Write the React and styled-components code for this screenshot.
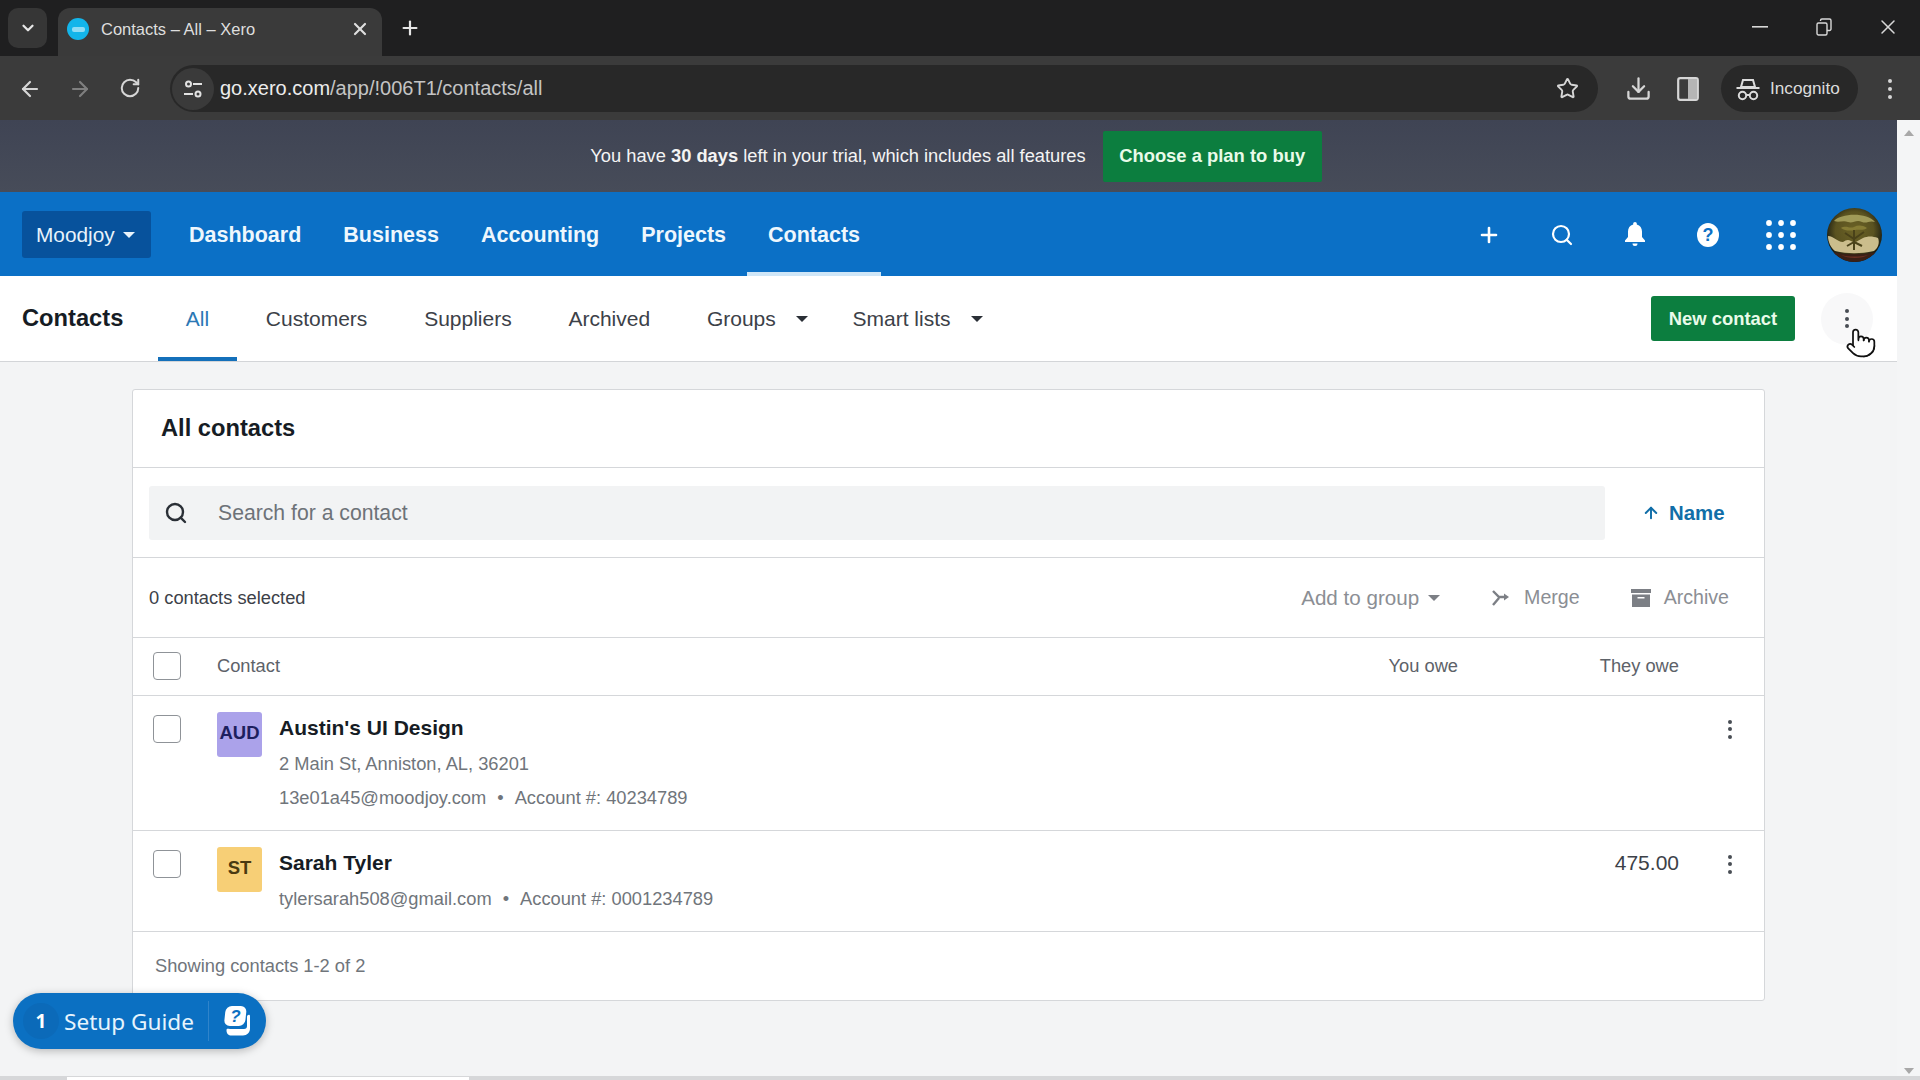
import React from 'react';
import styled, { createGlobalStyle } from 'styled-components';
import { ChevronDown, X, Plus, ArrowLeft, ArrowRight, RotateCw, Star, Download, Search, Pointer, ArrowUp } from 'lucide-react';

const Global = createGlobalStyle`
  html, body { margin: 0; padding: 0; height: 100%; overflow: hidden; }
  body { font-family: "Liberation Sans", Arial, sans-serif; background: #f3f4f5; }
  * { box-sizing: border-box; }
`;

const Frame = styled.div`
  width: 1920px; height: 1080px; display: flex; flex-direction: column; overflow: hidden; position: relative;
`;
const TabStrip = styled.div`
  height: 56px; background: #1f1f20; display: flex; align-items: flex-end; padding-left: 8px; color: #e6e6e6; flex: none;
`;
const TabMenu = styled.div`
  width: 39px; height: 40px; margin-bottom: 8px; background: #363636; border-radius: 10px; display: flex; align-items: center; justify-content: center;
`;
const ActiveTab = styled.div`
  width: 324px; height: 48px; margin-left: 11px; background: #3a3a3a; border-radius: 12px 12px 0 0; display: flex; align-items: center; padding: 0 12px 6px 9px; font-size: 16.5px; color: #dedede;
`;
const Favicon = styled.div`
  width: 22px; height: 22px; border-radius: 50%; background: #13b5ea; flex: none; margin-right: 12px; display: flex; align-items: center; justify-content: center;
  &::after { content: ''; width: 13px; height: 5px; background: #8fdcf5; border-radius: 2px; }
`;
const TabTitle = styled.span`flex: 1; white-space: nowrap;`;
const NewTab = styled.div`margin: 0 0 8px 16px; width: 24px; height: 40px; display: flex; align-items: center; justify-content: center;`;
const WindowControls = styled.div`
  margin-left: auto; display: flex; height: 56px; align-items: center; padding-bottom: 2px; padding-right: 0;
`;
const WinBtn = styled.div`width: 64px; display: flex; justify-content: center; align-items: center; color: #d8d8d8;`;

const Toolbar = styled.div`
  height: 64px; background: #3b3b3b; display: flex; align-items: center; flex: none; color: #d6d6d6; position: relative; padding-top: 1px;
`;
const NavGlyph = styled.div`
  width: 50px; display: flex; justify-content: center; color: ${p => p.$dim ? '#7f7f7f' : '#d6d6d6'};
`;
const GlyphGroup = styled.div`display: flex; padding-left: 5px; margin-right: 15px;`;
const Omnibox = styled.div`
  width: 1428px; height: 47px; background: #282828; border-radius: 24px; display: flex; align-items: center; padding: 0 19px 0 0; font-size: 20px; flex: none;
`;
const SiteChip = styled.div`
  width: 42px; height: 42px; margin-left: 2px; border-radius: 50%; background: #3a3a3a; display: flex; align-items: center; justify-content: center; margin-right: 6px; flex: none;
`;
const Url = styled.div`flex: 1; color: #c4c4c4; b { font-weight: 400; color: #ececec; }`;
const ToolIcons = styled.div`display: flex; align-items: center; margin-left: 15px; flex: 1;`;
const ToolIcon = styled.div`width: 50px; display: flex; justify-content: center;`;
const IncognitoPill = styled.div`
  width: 137px; height: 47px; background: #282828; border-radius: 24px; margin-left: 8px; display: flex; align-items: center; padding-left: 14px; gap: 9px; font-size: 17.2px; color: #dcdcdc;
`;
const ChromeMenu = styled.div`margin-left: 14px; width: 36px; display: flex; justify-content: center;`;

const Viewport = styled.div`flex: 1; display: flex; min-height: 0;`;
const Page = styled.div`flex: 1; min-width: 0; display: flex; flex-direction: column; background: #f3f4f5;`;
const ScrollTrack = styled.div`
  width: 23px; background: #f4f5f6; display: flex; flex-direction: column; align-items: center; justify-content: space-between; padding: 10px 0 6px; flex: none;
`;
const ScrollArrow = styled.div`
  width: 0; height: 0; border-left: 5px solid transparent; border-right: 5px solid transparent;
  ${p => p.$down ? 'border-top: 6px solid #a8a8a8;' : 'border-bottom: 6px solid #a8a8a8;'}
`;

const Banner = styled.div`
  height: 72px; background: linear-gradient(#3f4454, #474c59); display: flex; align-items: center; justify-content: center; color: #f4f4f4; font-size: 18.3px; flex: none;
  b { font-weight: 700; }
`;
const BannerInner = styled.div`display: flex; align-items: center; margin-left: 15px;`;
const PlanButton = styled.div`
  width: 219px; height: 51px; background: #0c7e3f; margin-left: 17px; display: flex; align-items: center; justify-content: center; font-weight: 700; font-size: 18.4px; color: #e9fbe9; border-radius: 2px;
`;

const TopNav = styled.div`
  height: 84px; background: #0b70c6; display: flex; align-items: center; padding: 1px 6px 0 22px; flex: none; color: #fff;
`;
const OrgButton = styled.div`
  width: 129px; height: 47px; background: #07529c; border-radius: 3px; display: flex; align-items: center; padding-left: 14px; font-size: 20.8px; color: #e8f3fb; margin-right: 17px; flex: none;
`;
const Caret = styled.span`
  display: inline-block; width: 0; height: 0; border-left: ${p => p.$s || 6}px solid transparent; border-right: ${p => p.$s || 6}px solid transparent; border-top: ${p => p.$s || 6}px solid ${p => p.$c || 'currentColor'}; margin-left: ${p => p.$m ?? 8}px;
`;
const NavItem = styled.div`
  align-self: stretch; padding: 1px 21px 0; display: flex; align-items: center; font-weight: 700; font-size: 21.5px; color: #eef7fd; position: relative;
  ${p => p.$active && `&::after { content: ''; position: absolute; left: 0; right: 0; bottom: 0; height: 4px; background: #cfe6f7; }`}
`;
const NavRight = styled.div`margin-left: auto; display: flex; align-items: center;`;
const NavIcon = styled.div`width: 73px; display: flex; justify-content: center; align-items: center; color: #fff;`;
const AvatarSlot = styled.div`width: 74px; display: flex; justify-content: center;`;

const SubBar = styled.div`
  height: 86px; background: #fff; border-bottom: 1px solid #d3d5d8; display: flex; align-items: center; padding: 0 24px 0 22px; flex: none; gap: 0.75px;
`;
const SubTitle = styled.div`width: 135px; font-weight: 700; font-size: 23.7px; color: #161c24;`;
const SubTab = styled.div`
  height: 85px; padding: 0 ${p => p.$pr ?? 28}px 0 28px; display: flex; align-items: center; font-size: 21px; color: ${p => p.$active ? '#2b78b5' : '#3c4148'}; position: relative; white-space: nowrap;
  ${p => p.$active && `&::after { content: ''; position: absolute; left: 0; right: 0; bottom: 0; height: 4px; background: #1470ba; }`}
`;
const SubRight = styled.div`margin-left: auto; display: flex; align-items: center; gap: 26px;`;
const NewContact = styled.div`
  width: 144px; height: 45px; background: #0c7e3f; border-radius: 3px; color: #e9fbe9; font-weight: 700; font-size: 18.4px; display: flex; align-items: center; justify-content: center;
`;
const MoreBtn = styled.div`
  width: 52px; height: 52px; border-radius: 50%; background: #f8f8f9; display: flex; align-items: center; justify-content: center;
`;
const Dots = styled.div`
  display: flex; flex-direction: column; gap: ${p => p.$g ?? 3.5}px;
  i { display: block; width: 4px; height: 4px; border-radius: 50%; background: ${p => p.$c || '#484d54'}; }
`;

const Card = styled.div`
  width: 1633px; margin: 27px 0 0 132px; background: #fff; border: 1px solid #d5d7da; border-radius: 3px; flex: none;
`;
const CardHeader = styled.div`
  height: 78px; border-bottom: 1px solid #d5d7da; display: flex; align-items: center; padding-left: 28px; font-weight: 700; font-size: 23.7px; color: #161c24;
`;
const SearchRow = styled.div`
  height: 90px; border-bottom: 1px solid #d5d7da; display: flex; align-items: center; padding-left: 16px;
`;
const SearchBox = styled.div`
  width: 1456px; height: 54px; background: #f2f3f4; border-radius: 3px; display: flex; align-items: center; padding-left: 15px; color: #6d7278; font-size: 21.2px; gap: 30px;
`;
const SearchGlyph = styled(Search)`color: #2a2f36;`;
const SortBtn = styled.div`
  margin-left: 37px; padding-top: 1px; display: flex; align-items: center; gap: 9px; color: #116ea8; font-weight: 700; font-size: 20.4px;
`;
const SelectRow = styled.div`
  height: 80px; border-bottom: 1px solid #d5d7da; display: flex; align-items: center; padding: 0 35px 0 16px; font-size: 18.3px; color: #3c4148;
`;
const Actions = styled.div`margin-left: auto; display: flex; align-items: center; gap: 51px; color: #8b8e94; font-size: 19.6px;`;
const Action = styled.div`display: flex; align-items: center; gap: ${p => p.$g ?? 11}px;`;
const AddGroupLabel = styled.span`font-size: 20.6px;`;

const GridRow = styled.div`
  display: grid; grid-template-columns: 64px 1fr 150px 221px 85px; padding-left: 20px; border-bottom: 1px solid #d5d7da; align-items: start; height: ${p => p.$h}px; padding-top: ${p => p.$pt ?? 17}px;
`;
const ColumnHead = styled(GridRow)`align-items: center; color: #5d6269; font-size: 18.3px; padding-bottom: 1px;`;
const HeadLabel = styled.div``;
const HeadRight = styled.div`text-align: right;`;
const Check = styled.div`
  width: 28px; height: 28px; border: 1.5px solid #8f9398; border-radius: 4px; background: #fff; margin-top: ${p => p.$mt ?? 0}px;
`;
const ContactCell = styled.div`display: flex; gap: 17px;`;
const Avatar = styled.div`
  width: 45px; height: 45px; margin-top: -1px; padding-bottom: 3px; background: ${p => p.$bg}; color: ${p => p.$fg}; border-radius: 3px; display: flex; align-items: center; justify-content: center; font-weight: 700; font-size: 18.5px; flex: none;
`;
const ContactInfo = styled.div`display: flex; flex-direction: column; margin-top: -1px;`;
const ContactName = styled.div`font-weight: 700; font-size: 21px; line-height: 32px; color: #161c24;`;
const Detail = styled.div`
  font-size: 18.3px; line-height: 34px; color: #70757b; margin-top: ${p => p.$mt ?? 0}px; white-space: nowrap;
`;
const Bullet = styled.span`margin: 0 11px;`;
const Amount = styled.div`font-size: 21px; color: #3c4148; text-align: right; line-height: 30px; grid-column: 4;`;
const RowMenu = styled.div`grid-column: 5; margin-left: 49px; height: 32px; display: flex; align-items: center;`;
const Footer = styled.div`height: 68px; display: flex; align-items: center; padding-left: 22px; font-size: 18.3px; color: #70757b;`;

const SetupGuide = styled.div`
  position: absolute; left: 13px; top: 993px; width: 253px; height: 56px; border-radius: 28px; background: #0b70c2; box-shadow: 0 2px 8px rgba(0,0,0,.25); display: flex; align-items: center; color: #e6f4fd;
`;
const GuideCount = styled.div`
  width: 36px; height: 36px; margin-left: 10px; border-radius: 50%; background: #0b6ab9; display: flex; align-items: center; justify-content: center; font-weight: 700; font-size: 19px; font-family: "Noto Sans", sans-serif; color: #fff;
`;
const GuideLabel = styled.div`margin-left: 5px; font-family: "Noto Sans", sans-serif; font-size: 22.6px; width: 144px; white-space: nowrap;`;
const GuideIcon = styled.div`
  flex: 1; height: 40px; border-left: 1px solid #2f84cb; display: flex; align-items: center; justify-content: center; padding-right: 2px;
`;
const HandCursor = styled.div`position: absolute; left: 1845px; top: 327px; width: 30px; height: 34px; z-index: 5;`;
const BottomEdge = styled.div`
  position: absolute; left: 0; right: 0; bottom: 0; height: 4px; background: #d6d7d9;
  &::after { content: ''; position: absolute; left: 67px; top: 1px; width: 402px; height: 3px; background: #fff; }
`;

const ThreeDots = (p) => <Dots {...p}><i /><i /><i /></Dots>;

const SiteIcon = () => (
  <svg width="20" height="20" viewBox="0 0 20 20" fill="none" stroke="#e2e2e2" strokeWidth="2">
    <circle cx="5.5" cy="5" r="2.5" /><path d="M10 5h9M1 15h9" /><circle cx="15" cy="15" r="2.5" />
  </svg>
);
const SidePanelIcon = () => (
  <svg width="22" height="24" viewBox="0 0 22 24"><rect x="1.2" y="1.2" width="19.6" height="21.6" rx="2" fill="none" stroke="#d6d6d6" strokeWidth="2.2" /><rect x="11" y="2" width="9" height="20" fill="#b5b5b5" /></svg>
);
const IncognitoIcon = () => (
  <svg width="26" height="26" viewBox="0 0 26 26" fill="none" stroke="#dcdcdc" strokeWidth="2">
    <path d="M8 4h10l2 7H6zM1.5 12h23" /><circle cx="7.5" cy="19.5" r="3.7" /><circle cx="18.5" cy="19.5" r="3.7" /><path d="M11.2 19h3.6" />
  </svg>
);
const RestoreIcon = () => (
  <svg width="16" height="18" viewBox="0 0 16 18" fill="none" stroke="#d8d8d8" strokeWidth="1.4"><rect x="1" y="5" width="10" height="12" rx="1.5" /><path d="M4.5 3V2.5A1.5 1.5 0 0 1 6 1h7.5A1.5 1.5 0 0 1 15 2.500V11a1.500 1.500 0 0 1-1.500 1.500H11" /></svg>
);
const MinimizeIcon = () => <svg width="16" height="2"><rect width="16" height="1.600" fill="#d8d8d8" /></svg>;
const BellIcon = () => (
  <svg width="20" height="25" viewBox="0 0 20 25" fill="#fff"><path d="M10 0c1.100 0 1.800.8 1.800 1.800v.6C15.200 3.300 17 6 17 9.600V15l3 3.400V20H0v-1.600L3 15V9.600C3 6 4.800 3.300 8.200 2.400v-.6C8.200.8 8.900 0 10 0z" /><path d="M7.500 21.500h5a2.500 2.500 0 0 1-5 0z" /></svg>
);
const HelpIcon = () => (
  <svg width="22" height="24" viewBox="0 0 22 24"><ellipse cx="11" cy="12" rx="11" ry="12" fill="#fff" /><text x="11" y="18" textAnchor="middle" fontSize="18" fontWeight="700" fontFamily="Liberation Sans" fill="#0b70c6">?</text></svg>
);
const AppsIcon = () => (
  <svg width="30" height="30" viewBox="0 0 30 30" fill="#fff">
    {[3, 15, 27].flatMap(y => [3, 15, 27].map(x => <circle key={`${x}-${y}`} cx={x} cy={y} r="2.900" />))}
  </svg>
);
const UserPhoto = () => (
  <svg width="55" height="54" viewBox="0 0 55 54">
    <defs>
      <radialGradient id="ph" cx="50%" cy="42%" r="58%">
        <stop offset="0%" stopColor="#6b6226" /><stop offset="60%" stopColor="#5a5220" /><stop offset="85%" stopColor="#2a2915" /><stop offset="100%" stopColor="#101410" />
      </radialGradient>
      <clipPath id="phc"><ellipse cx="27.500" cy="27" rx="27.500" ry="27" /></clipPath>
    </defs>
    <ellipse cx="27.500" cy="27" rx="27.500" ry="27" fill="url(#ph)" />
    <g clipPath="url(#phc)">
      <path d="M7 13C14 5 40 4 48 14c-6-2-8 2-13 0-6-3-9 2-14 0-5-2-9 1-14-1z" fill="#a09a58" />
      <path d="M14 20c5-3 9 1 13-1s8-2 13 1c-4 3-8 1-12 2-5 1-10 1-14-2z" fill="#867c35" />
      <path d="M1 28c6 0 9 6 15 6 3-2 5-3 8-1 4 3 8-1 12-3 5-2 9-2 15 0 2 5 0 10-4 13-14 3-26 3-39 0-4-3-7-9-7-15z" fill="#cbbd8c" />
      <path d="M27 22v20M27 31l-9-6M27 31l10-7M20 38l7-4M35 38l-8-4" stroke="#4a4219" strokeWidth="2" fill="none" />
      <path d="M6 44c12 3 30 3 43 0-2 8-10 10-22 10S8 52 6 44z" fill="#3a2016" />
      <path d="M14 47c8 2 18 2 27 0-6 4-20 4-27 0z" fill="#6b3022" />
    </g>
  </svg>
);
const MergeIcon = () => (
  <svg width="20" height="20" viewBox="0 0 20 20" fill="none" stroke="#7c7f85" strokeWidth="2.400">
    <path d="M2 3l6 6h7M2 17l6-7" /><path d="M13 5.500l5 3.500-5 3.500z" fill="#7c7f85" stroke="none" />
  </svg>
);
const ArchiveIcon = () => (
  <svg width="20" height="20" viewBox="0 0 20 20" fill="#7c7f85"><rect x="0" y="1" width="20" height="4" /><path d="M1 6.500h18V19H1zM6.500 9v1.600h7V9z" fillRule="evenodd" /></svg>
);
const GuideGlyph = () => (
  <svg width="30" height="32" viewBox="0 0 30 32" fill="none">
    <path d="M8 24c-2 0-3.500-1-3.500 1.500 0 3 2 5 5 5H21c4 0 7-3 7-7V11c0-2-3-1.500-3 1v9c0 2-1 3-3 3z" fill="#fff" />
    <rect x="2" y="1" width="21" height="20" rx="6" fill="#fff" transform="skewX(-6) translate(2 0)" />
    <text x="13.500" y="17" textAnchor="middle" fontSize="17" fontWeight="700" fontStyle="italic" fontFamily="Liberation Sans" fill="#0b70c2">?</text>
  </svg>
);

export default function App() {
  return (
    <Frame>
      <Global />
      <TabStrip>
        <TabMenu><ChevronDown size={18} strokeWidth={3} /></TabMenu>
        <ActiveTab>
          <Favicon />
          <TabTitle>Contacts – All – Xero</TabTitle>
          <X size={20} strokeWidth={2.6} />
        </ActiveTab>
        <NewTab><Plus size={22} strokeWidth={2.4} /></NewTab>
        <WindowControls>
          <WinBtn><MinimizeIcon /></WinBtn>
          <WinBtn><RestoreIcon /></WinBtn>
          <WinBtn><X size={24} strokeWidth={1.5} /></WinBtn>
        </WindowControls>
      </TabStrip>
      <Toolbar>
        <GlyphGroup>
          <NavGlyph><ArrowLeft size={24} strokeWidth={2.2} /></NavGlyph>
          <NavGlyph $dim><ArrowRight size={24} strokeWidth={2.2} /></NavGlyph>
          <NavGlyph><RotateCw size={22} strokeWidth={2.2} /></NavGlyph>
        </GlyphGroup>
        <Omnibox>
          <SiteChip><SiteIcon /></SiteChip>
          <Url><b>go.xero.com</b>/app/!006T1/contacts/all</Url>
          <Star size={23} strokeWidth={2} />
        </Omnibox>
        <ToolIcons>
          <ToolIcon><Download size={27} strokeWidth={2} /></ToolIcon>
          <ToolIcon><SidePanelIcon /></ToolIcon>
          <IncognitoPill><IncognitoIcon />Incognito</IncognitoPill>
          <ChromeMenu><ThreeDots $c="#d6d6d6" $g={4} /></ChromeMenu>
        </ToolIcons>
      </Toolbar>
      <Viewport>
        <Page>
          <Banner>
            <BannerInner>
              <span>You have <b>30 days</b> left in your trial, which includes all features</span>
              <PlanButton>Choose a plan to buy</PlanButton>
            </BannerInner>
          </Banner>
          <TopNav>
            <OrgButton>Moodjoy<Caret $m={8} /></OrgButton>
            <NavItem>Dashboard</NavItem>
            <NavItem>Business</NavItem>
            <NavItem>Accounting</NavItem>
            <NavItem>Projects</NavItem>
            <NavItem $active>Contacts</NavItem>
            <NavRight>
              <NavIcon><Plus size={24} strokeWidth={2.6} /></NavIcon>
              <NavIcon><Search size={24} strokeWidth={2.2} /></NavIcon>
              <NavIcon><BellIcon /></NavIcon>
              <NavIcon><HelpIcon /></NavIcon>
              <NavIcon><AppsIcon /></NavIcon>
              <AvatarSlot><UserPhoto /></AvatarSlot>
            </NavRight>
          </TopNav>
          <SubBar>
            <SubTitle>Contacts</SubTitle>
            <SubTab $active>All</SubTab>
            <SubTab>Customers</SubTab>
            <SubTab>Suppliers</SubTab>
            <SubTab>Archived</SubTab>
            <SubTab $pr={16}>Groups<Caret $s={6.5} $m={20} $c="#2a2f36" /></SubTab>
            <SubTab $pr={20}>Smart lists<Caret $s={6.5} $m={20} $c="#2a2f36" /></SubTab>
            <SubRight>
              <NewContact>New contact</NewContact>
              <MoreBtn><ThreeDots /></MoreBtn>
            </SubRight>
          </SubBar>
          <Card>
            <CardHeader>All contacts</CardHeader>
            <SearchRow>
              <SearchBox><SearchGlyph size={24} strokeWidth={2.4} />Search for a contact</SearchBox>
              <SortBtn><ArrowUp size={18} strokeWidth={2.6} />Name</SortBtn>
            </SearchRow>
            <SelectRow>
              0 contacts selected
              <Actions>
                <Action $g={9}><AddGroupLabel>Add to group</AddGroupLabel><Caret $m={0} $s={6.5} $c="#7c7f85" /></Action>
                <Action $g={13}><MergeIcon />Merge</Action>
                <Action $g={13}><ArchiveIcon />Archive</Action>
              </Actions>
            </SelectRow>
            <ColumnHead $h={58} $pt={0}>
              <Check />
              <HeadLabel>Contact</HeadLabel>
              <HeadRight>You owe</HeadRight>
              <HeadRight>They owe</HeadRight>
            </ColumnHead>
            <GridRow $h={135}>
              <Check $mt={2} />
              <ContactCell>
                <Avatar $bg="#aba2ea" $fg="#1e1f5e">AUD</Avatar>
                <ContactInfo>
                  <ContactName>Austin's UI Design</ContactName>
                  <Detail $mt={3}>2 Main St, Anniston, AL, 36201</Detail>
                  <Detail>13e01a45@moodjoy.com<Bullet>•</Bullet>Account #: 40234789</Detail>
                </ContactInfo>
              </ContactCell>
              <RowMenu><ThreeDots /></RowMenu>
            </GridRow>
            <GridRow $h={101}>
              <Check $mt={2} />
              <ContactCell>
                <Avatar $bg="#f7cf76" $fg="#4a3a10">ST</Avatar>
                <ContactInfo>
                  <ContactName>Sarah Tyler</ContactName>
                  <Detail $mt={3}>tylersarah508@gmail.com<Bullet>•</Bullet>Account #: 0001234789</Detail>
                </ContactInfo>
              </ContactCell>
              <Amount>475.00</Amount>
              <RowMenu><ThreeDots /></RowMenu>
            </GridRow>
            <Footer>Showing contacts 1-2 of 2</Footer>
          </Card>
        </Page>
        <ScrollTrack><ScrollArrow /><ScrollArrow $down /></ScrollTrack>
      </Viewport>
      <SetupGuide>
        <GuideCount>1</GuideCount>
        <GuideLabel>Setup Guide</GuideLabel>
        <GuideIcon><GuideGlyph /></GuideIcon>
      </SetupGuide>
      <HandCursor><Pointer size={32} strokeWidth={1.3} color="#111" fill="#fff" /></HandCursor>
      <BottomEdge />
    </Frame>
  );
}
